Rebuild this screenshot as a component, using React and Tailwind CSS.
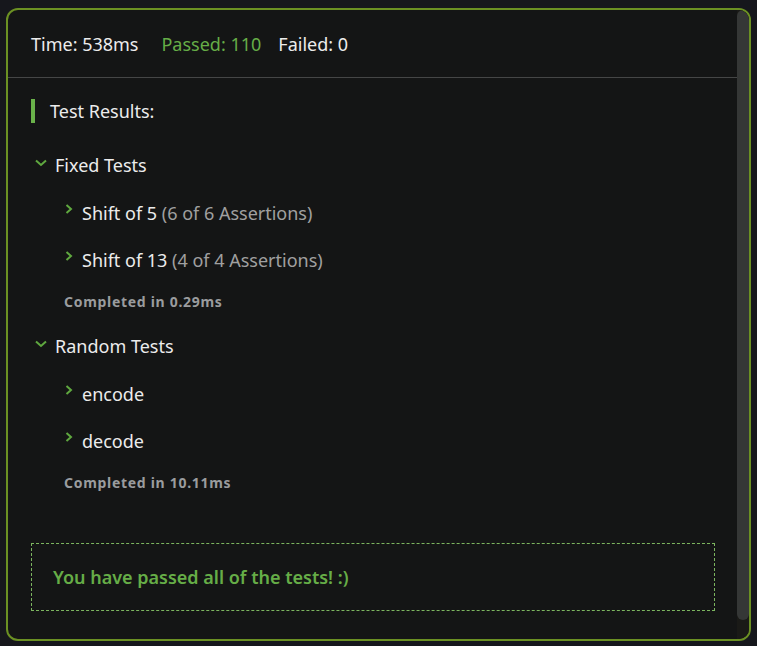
import React from "react";

const GREEN = "text-[#66ad47]";

function Down() {
  return (
    <svg width="12" height="8" viewBox="0 0 12 8" className="shrink-0 -mt-[5px]" fill="none" stroke="#5fa83f" strokeWidth="2">
      <path d="M1 1.5 L6 6 L11 1.5" />
    </svg>
  );
}

function Right() {
  return (
    <svg width="8" height="10" viewBox="0 0 8 10" className="shrink-0 -mt-[8px]" fill="none" stroke="#5fa83f" strokeWidth="2">
      <path d="M1.5 1 L6 5 L1.5 9" />
    </svg>
  );
}

function Group({ title, items, time }) {
  return (
    <div>
      <div className="flex items-center gap-[8px] pl-[27px] h-[24px]">
        <Down />
        <span>{title}</span>
      </div>
      <div className="mt-[24px] flex flex-col gap-[23px] pl-[57px]">
        {items.map((it) => (
          <div key={it.name} className="flex items-center gap-[9px] h-[24px]">
            <Right />
            <span>
              {it.name}
              {it.note && <span className="text-[#a0a0a0]"> {it.note}</span>}
            </span>
          </div>
        ))}
      </div>
      <div className="mt-[20px] pl-[56px] text-[14px] font-bold tracking-[0.05em] text-[#9a9c9e] h-[20px] leading-[20px]">
        {time}
      </div>
    </div>
  );
}

export default function App() {
  return (
    <div
      className="w-[757px] h-[646px] bg-[#16171c] pt-[8px] pl-[6px] text-[#ececec] text-[18px]"
      style={{ fontFamily: '"Noto Sans", "Liberation Sans", sans-serif' }}
    >
      <div className="w-[745px] h-[633px] border-2 border-[#6b9023] rounded-[12px] bg-[#141515] flex overflow-hidden">
        {/* Content */}
        <div className="flex-1 flex flex-col">
          {/* Header */}
          <div className="h-[68px] border-b border-[#454646] flex items-center pl-[23px] pt-[2px]">
            <span>Time: 538ms</span>
            <span className={`${GREEN} ml-[23px]`}>Passed: 110</span>
            <span className="ml-[17px]">Failed: 0</span>
          </div>

          {/* Title */}
          <div className="mt-[21px] ml-[23px] flex items-center gap-[15px] h-[24px]">
            <div className="w-[4px] h-[24px] bg-[#6ab24a]" />
            <span>Test Results:</span>
          </div>

          <div className="mt-[30px]">
            <Group
              title="Fixed Tests"
              items={[
                { name: "Shift of 5", note: "(6 of 6 Assertions)" },
                { name: "Shift of 13", note: "(4 of 4 Assertions)" },
              ]}
              time="Completed in 0.29ms"
            />
          </div>
          <div className="mt-[22px]">
            <Group
              title="Random Tests"
              items={[{ name: "encode" }, { name: "decode" }]}
              time="Completed in 10.11ms"
            />
          </div>

          {/* Success */}
          <div className="mt-[50px] ml-[23px] mr-[22px] h-[68px] border border-dashed border-[#7cb55f] flex items-center pl-[21px]">
            <span className={`${GREEN} font-semibold`}>You have passed all of the tests! :)</span>
          </div>
        </div>

        {/* Scrollbar */}
        <div className="w-[12px] bg-[#1a1a17] flex flex-col">
          <div className="h-[610px] bg-[#353736] rounded-full" />
        </div>
      </div>
    </div>
  );
}
